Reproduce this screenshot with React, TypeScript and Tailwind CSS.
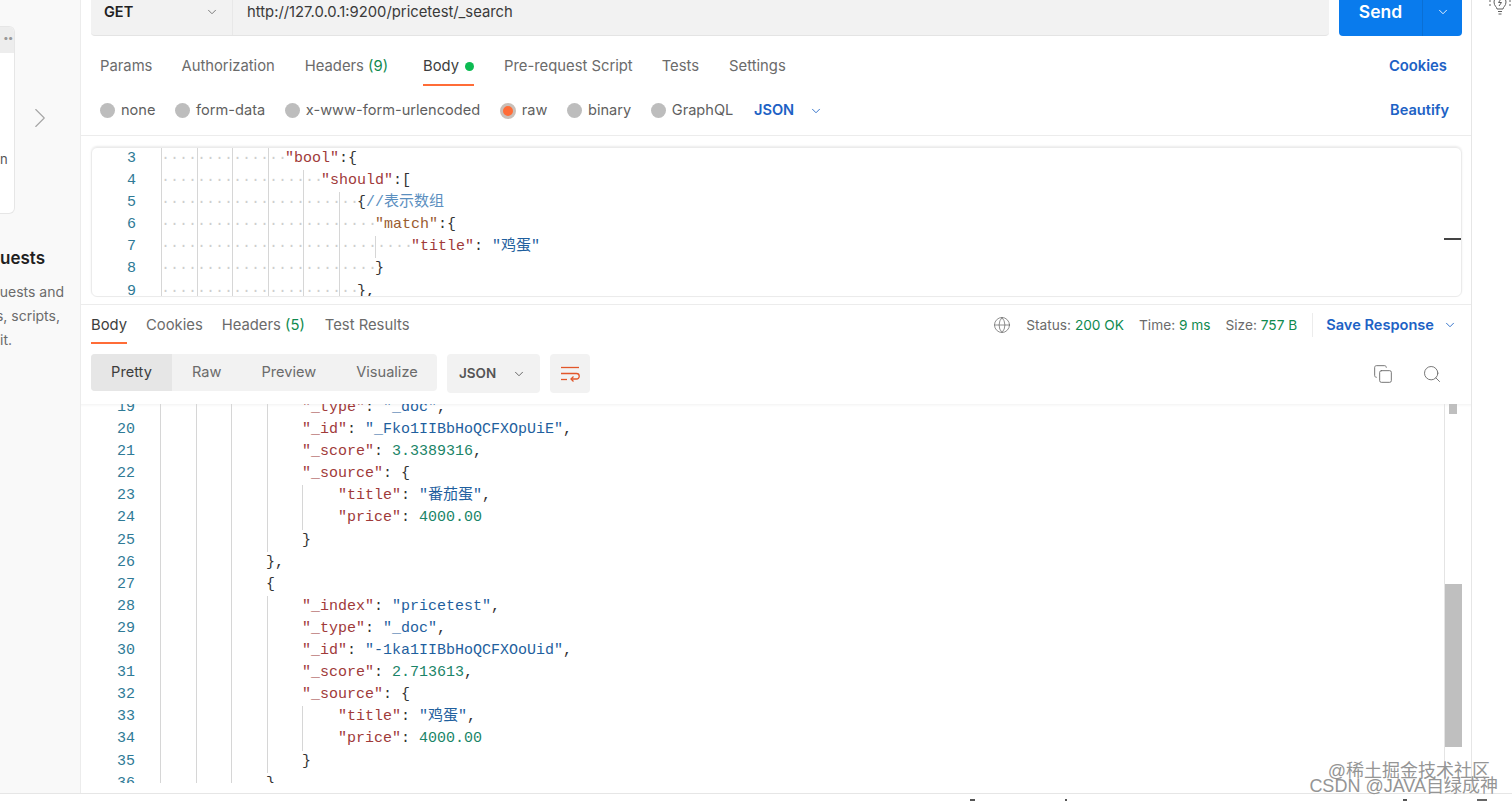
import React from 'react';
import { ChevronDown, ChevronRight, Copy, Globe, Search } from 'lucide-react';

type Tok = { t: string; c: string };

const KEY = 'text-[#a03a3a]';
const STR = 'text-[#1f5f9e]';
const NUM = 'text-[#1b8468]';
const PUN = 'text-[#333333]';

const key = (t: string): Tok => ({ t, c: KEY });
const str = (t: string): Tok => ({ t, c: STR });
const num = (t: string): Tok => ({ t, c: NUM });
const pun = (t: string): Tok => ({ t, c: PUN });

const requestLines: { n: number; spaces: number; guides: number; toks: Tok[] }[] = [
  { n: 3, spaces: 14, guides: 4, toks: [key('"bool"'), pun(':{')] },
  { n: 4, spaces: 18, guides: 5, toks: [key('"should"'), pun(':[')] },
  { n: 5, spaces: 22, guides: 6, toks: [pun('{'), { t: '//表示数组', c: 'text-[#5b8fbf]' }] },
  { n: 6, spaces: 24, guides: 6, toks: [{ t: '"match"', c: 'text-[#9a5c30]' }, pun(':{')] },
  { n: 7, spaces: 28, guides: 7, toks: [key('"title"'), pun(': '), str('"鸡蛋"')] },
  { n: 8, spaces: 24, guides: 6, toks: [pun('}')] },
  { n: 9, spaces: 22, guides: 6, toks: [pun('},')] },
];

const source = (id: string, score: string, title: string, index?: boolean) => [
  ...(index ? [{ g: 4, toks: [key('"_index"'), pun(': '), str('"pricetest"'), pun(',')] }] : []),
  { g: 4, toks: [key('"_type"'), pun(': '), str('"_doc"'), pun(',')] },
  { g: 4, toks: [key('"_id"'), pun(': '), str(`"${id}"`), pun(',')] },
  { g: 4, toks: [key('"_score"'), pun(': '), num(score), pun(',')] },
  { g: 4, toks: [key('"_source"'), pun(': {')] },
  { g: 5, toks: [key('"title"'), pun(': '), str(`"${title}"`), pun(',')] },
  { g: 5, toks: [key('"price"'), pun(': '), num('4000.00')] },
  { g: 4, toks: [pun('}')] },
];

const responseLines: { g: number; toks: Tok[] }[] = [
  ...source('_Fko1IIBbHoQCFXOpUiE', '3.3389316', '番茄蛋'),
  { g: 3, toks: [pun('},')] },
  { g: 3, toks: [pun('{')] },
  ...source('-1ka1IIBbHoQCFXOoUid', '2.713613', '鸡蛋', true),
  { g: 3, toks: [pun('},')] },
];

const Radio = ({ label, active }: { label: string; active?: boolean }) => (
  <div className="flex items-center gap-[6px]">
    {active ? (
      <span className="w-4 h-4 rounded-full bg-[#ff6c37] border-[3px] border-[#c9bfb8]" />
    ) : (
      <span className="w-[15px] h-[15px] rounded-full bg-[#bdbdbd]" />
    )}
    <span className="text-[#5f5f5f]">{label}</span>
  </div>
);

const App: React.FC = () => {
  return (
    <div className="w-[1512px] h-[802px] overflow-hidden bg-white flex flex-col relative font-['Inter',sans-serif] text-[14.8px]">
      <div className="flex flex-1 min-h-0">
        {/* collections panel, cut off by the crop */}
        <div className="w-[81px] shrink-0 bg-[#f9f9f9] border-r border-[#ececec] flex flex-col overflow-hidden">
          <div className="flex items-center mt-[26px] h-[188px]">
            <div className="w-[15px] h-full bg-white border border-l-0 border-[#e6e6e6] rounded-r-[6px] overflow-hidden">
              <div className="h-[26px] bg-[#ededed] text-[#999999] text-[10px] leading-[20px] font-bold text-right pr-[1px]">••</div>
              <div className="mt-[100px] text-[#555555] text-[13px] leading-none">n</div>
            </div>
            <ChevronRight className="ml-[8px] mb-[4px] text-[#a6a6a6]" size={34} strokeWidth={0.8} />
          </div>
          <div className="mt-[33px] text-right pr-[35px] text-[17px] leading-[22px] font-semibold text-[#1f1f1f]">uests</div>
          <div className="mt-[11px] text-[#6b6b6b] text-[14px] leading-[24px] w-[64px] overflow-hidden">
            <div className="whitespace-nowrap flex justify-end">uests and</div>
            <div className="whitespace-nowrap flex justify-end pr-[4px]">s, scripts,</div>
            <div className="whitespace-nowrap">it.</div>
          </div>
        </div>

        <div className="flex-1 min-w-0 flex flex-col">
          {/* url bar */}
          <div className="flex h-9 pl-[10px] pr-[9px] shrink-0 gap-[10px]">
            <div className="flex flex-1 bg-[#f2f2f2] rounded-b-[4px] border-b border-[#e4e4e4] leading-[24px]">
              <div className="w-[142px] flex justify-between pl-[13px] pr-[13px] border-r border-[#e8e8e8]">
                <span className="font-semibold text-[14.5px] text-[#212121]">GET</span>
                <ChevronDown className="mt-[5px] text-[#6b6b6b]" size={14} strokeWidth={1.5} />
              </div>
              <span className="pl-[14px] text-[#3a3a3a]">http://127.0.0.1:9200/pricetest/_search</span>
            </div>
            <div className="w-[123px] flex bg-[#097bed] rounded-b-[4px] text-white">
              <span className="w-[83px] text-center text-[17.5px] leading-[24px] font-semibold">Send</span>
              <span className="flex-1 border-l border-[#0a6fd4] flex justify-center">
                <ChevronDown className="mt-[5px]" size={14} strokeWidth={1.5} />
              </span>
            </div>
          </div>

          {/* request tabs */}
          <div className="flex justify-between items-start h-[43px] mt-[18px] pl-[19px] pr-[24px] shrink-0">
            <div className="flex gap-[29px] text-[#6b6b6b] leading-[24px]">
              <span>Params</span>
              <span>Authorization</span>
              <span className="ml-[1px]">Headers <span className="text-[#0f8a4f]">(9)</span></span>
              <span className="border-b-2 border-[#ff6c37] h-[32px] flex gap-[6px] ml-[6px] text-[#3d3d3d]">
                Body
                <span className="w-[9px] h-[9px] mt-[8px] rounded-full bg-[#0cbb52]" />
              </span>
              <span className="ml-[1px]">Pre-request Script</span>
              <span>Tests</span>
              <span className="ml-[1px]">Settings</span>
            </div>
            <span className="text-[#1d62c5] font-semibold leading-[24px]">Cookies</span>
          </div>

          <div className="flex justify-between items-center h-[26px] mt-[1px] pl-[19px] pr-[22px] shrink-0 text-[14.6px]">
            <div className="flex items-center gap-[19.6px]">
              <Radio label="none" />
              <Radio label="form-data" />
              <Radio label="x-www-form-urlencoded" />
              <Radio label="raw" active />
              <Radio label="binary" />
              <Radio label="GraphQL" />
              <div className="flex items-center gap-[15px] ml-[1px] text-[#1d62c5] font-semibold">
                JSON
                <ChevronDown size={14} strokeWidth={1.5} />
              </div>
            </div>
            <span className="text-[#1d62c5] font-semibold">Beautify</span>
          </div>

          {/* request body */}
          <div className="mt-[11px] border-t border-[#ececec] shrink-0">
            <div className="ml-[10px] mr-[9px] mt-[11px] h-[150px] rounded-[6px] border border-[#ebebeb] overflow-hidden shadow-[0_-1px_2px_rgba(0,0,0,0.08)] flex font-['Liberation_Mono','Noto_Sans_CJK_SC',monospace] text-[15px]">
              <div className="flex-1">
                {requestLines.map((line) => (
                  <div key={line.n} className="flex h-[22.1px] leading-[21px]">
                    <span className="w-[44px] text-right text-[#2f7a96]">{line.n}</span>
                    <span className="w-[25px]" />
                    <span className="relative whitespace-pre">
                      <span className="text-[#cfcfcf] -mr-[2px]">{'·'.repeat(line.spaces)}</span>
                      {line.toks.map((tok, i) => (
                        <span key={i} className={tok.c}>{tok.t}</span>
                      ))}
                      <span className="absolute inset-0 flex pointer-events-none">
                        {Array.from({ length: line.guides }).map((_, i) => (
                          <span key={i} className="w-[35.6px] h-full border-l border-[#d6d6d6]" />
                        ))}
                      </span>
                    </span>
                  </div>
                ))}
              </div>
              <div className="w-[17px] flex items-start">
                <span className="mt-[90px] w-full h-[2px] bg-[#444444]" />
              </div>
            </div>
          </div>

          {/* response */}
          <div className="mt-[7px] border-t border-[#ececec] flex-1 min-h-0 flex flex-col">
            <div className="flex justify-between items-start h-[49px] pl-[10px] pr-[14px] pt-[8px] shrink-0">
              <div className="flex gap-[19px] text-[#6b6b6b] leading-[24px]">
                <span className="border-b-2 border-[#ff6c37] h-[31px] text-[#3d3d3d]">Body</span>
                <span>Cookies</span>
                <span>Headers <span className="text-[#0f8a4f]">(5)</span></span>
                <span className="ml-[1px]">Test Results</span>
              </div>
              <div className="flex items-center text-[13.7px] leading-[24px] text-[#6b6b6b]">
                <Globe className="text-[#6b6b6b] mr-[15px]" size={18} strokeWidth={1} />
                <span>Status: <span className="text-[#0f8a4f]">200 OK</span></span>
                <span className="ml-[15px]">Time: <span className="text-[#0f8a4f]">9 ms</span></span>
                <span className="ml-[15px]">Size: <span className="text-[#0f8a4f]">757 B</span></span>
                <span className="ml-[15px] pl-[13px] border-l border-[#ececec] text-[#1d62c5] font-semibold text-[14.6px] flex items-center gap-[9px]">
                  Save Response
                  <ChevronDown size={14} strokeWidth={1.5} />
                </span>
              </div>
            </div>

            <div className="flex items-start justify-between h-[50px] pl-[10px] pr-[29px] shrink-0">
              <div className="flex gap-[10px]">
                <div className="flex bg-[#f2f2f2] rounded-[4px] h-[37px] w-[346px] leading-[37px] text-[#6b6b6b] text-[14.6px]">
                  <span className="w-[81px] text-center bg-[#e6e6e6] rounded-l-[4px] text-[#3d3d3d]">Pretty</span>
                  <span className="ml-[20px]">Raw</span>
                  <span className="ml-[40px]">Preview</span>
                  <span className="ml-[40px]">Visualize</span>
                </div>
                <div className="flex items-center justify-between w-[93px] h-[39px] pl-[12px] pr-[14px] bg-[#f2f2f2] rounded-[4px] text-[#555555] text-[13.5px] font-semibold">
                  JSON
                  <ChevronDown size={14} strokeWidth={1.5} />
                </div>
                <div className="flex items-center justify-center w-[40px] h-[39px] bg-[#f2f2f2] rounded-[4px]">
                  <svg width="20" height="18" viewBox="0 0 20 18" fill="none" stroke="#e2562a" strokeWidth="1.3">
                    <path d="M1 2.5h18" />
                    <path d="M1 8.5h15.5a2.6 2.6 0 0 1 0 5.5H11" />
                    <path d="M13.5 11.5L11 14l2.5 2.5" />
                    <path d="M1 14.5h6" />
                  </svg>
                </div>
              </div>
              <div className="flex gap-[29px] mt-[10px] text-[#6b6b6b]">
                <Copy size={20} strokeWidth={1.1} />
                <Search size={20} strokeWidth={1.1} />
              </div>
            </div>

            <div className="flex-1 min-h-0 flex shadow-[inset_0_4px_3px_-3px_rgba(0,0,0,0.06)] mb-[10px] pr-[9px] font-['Liberation_Mono','Noto_Sans_CJK_SC',monospace] text-[15px]">
              <div className="flex-1 overflow-hidden">
                <div className="-mt-[7px]">
                  {responseLines.map((line, idx) => (
                    <div key={idx} className="flex h-[22.1px] leading-[22px]">
                      <span className="w-[54px] text-right text-[#2f7a96]">{idx + 19}</span>
                      <span className="w-[25px]" />
                      <span className="relative whitespace-pre">
                        <span className="-mr-[2px]">{' '.repeat(line.g * 4)}</span>
                        {line.toks.map((tok, i) => (
                          <span key={i} className={tok.c}>{tok.t}</span>
                        ))}
                        <span className="absolute inset-0 flex pointer-events-none">
                          {Array.from({ length: line.g }).map((_, i) => (
                            <span key={i} className="w-[35.6px] h-full border-l border-[#d6d6d6]" />
                          ))}
                        </span>
                      </span>
                    </div>
                  ))}
                </div>
              </div>
              <div className="w-[18px] border-l border-[#e4e4e4] flex flex-col">
                <span className="w-[8px] h-[10px] bg-[#bfbfbf] ml-[4px]" />
                <span className="w-full h-[163px] mt-[170px] bg-[#bfbfbf]" />
              </div>
            </div>
          </div>
        </div>

        {/* right rail */}
        <div className="w-[41px] shrink-0 border-l border-[#e6e6e6] flex justify-end">
          <svg className="-mt-[8px]" width="24" height="24" viewBox="0 0 24 24" fill="none" stroke="#5f5f5f" strokeWidth="1">
            <path d="M9 17c0-2-3-3-3-7a6 6 0 0 1 12 0c0 4-3 5-3 7z" />
            <path d="M10 19.5h4M10.5 22h3" />
            <path d="M13 7l-2.5 3.5h3L11 14" />
            <path d="M1 9h2M1 13h2M21 9h2M21 13h2" />
          </svg>
        </div>
      </div>

      {/* status bar, only the tops of its icons are in the crop */}
      <div className="h-[9px] shrink-0 border-t border-[#e6e6e6] bg-white flex items-end pb-[1px]">
        <span className="ml-[970px] w-[5px] h-[2px] bg-[#555555]" />
        <span className="ml-[90px] w-[2px] h-[2px] bg-[#555555]" />
        <span className="ml-[336px] w-[4px] h-[2px] bg-[#555555]" />
        <span className="ml-[70px] w-[10px] h-[2px] bg-[#666666]" />
      </div>

      {/* watermark on the picture */}
      <div className="absolute right-[14px] bottom-[8px] text-right text-[#959595] text-[18px] leading-[15px] whitespace-nowrap font-['Liberation_Sans','Noto_Sans_CJK_SC',sans-serif] pointer-events-none">
        <div className="pr-[8px]">@稀土掘金技术社区</div>
        <div>CSDN @JAVA自绿成神</div>
      </div>
    </div>
  );
};

export default App;
